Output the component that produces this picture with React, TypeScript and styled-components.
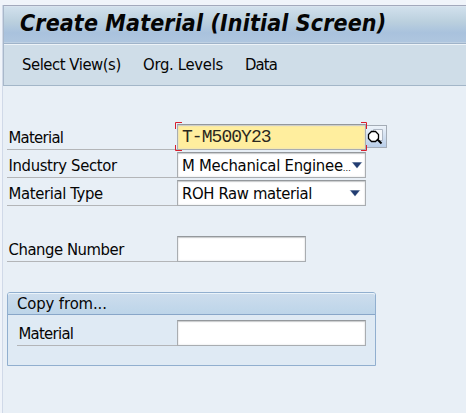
import React from "react";
import styled, { createGlobalStyle } from "styled-components";

const GlobalStyle = createGlobalStyle`
  * { box-sizing: border-box; }
  body {
    margin: 0;
    overflow: hidden;
    background: #f0f4fa;
    color: #050505;
    font-family: "DejaVu Sans Condensed", "DejaVu Sans", sans-serif;
    font-stretch: condensed;
    font-size: 16.5px;
  }
`;

const Screen = styled.div`
  height: 413px;
  padding: 5px 0 0 2px;
  overflow: hidden;
  white-space: nowrap;
`;

const Frame = styled.div`
  height: 408px;
  border-left: 1px solid #d0d9e8;
  background: #e8eff6;
`;

const TitleBar = styled.header`
  height: 39px;
  padding-left: 16px;
  border-top: 1px solid #a3a9bc;
  border-left: 1px solid #a9b8ca;
  border-bottom: 1px solid #9fb3c9;
  box-shadow: inset 0 1px #d8e3ee, inset 0 -1px #bfd1e3;
  background: linear-gradient(#d2e1ed 0%, #bbd0de 42%, #a9c2dd 72%, #afc6df 100%);
`;

const Title = styled.h1`
  margin: 0;
  font-size: 23px;
  line-height: 34px;
  font-weight: bold;
  font-style: italic;
  letter-spacing: 0.12px;
`;

const MenuBar = styled.nav`
  display: flex;
  height: 42px;
  padding-left: 18px;
  border-left: 1px solid #a9b8ca;
  border-bottom: 1px solid #a3b6c8;
  box-shadow: inset 0 1px #edf3f8;
  background: #cfdde8;
  line-height: 41px;
`;

const MenuItem = styled.span<{ $width: number; $spacing: number }>`
  width: ${(p) => p.$width}px;
  letter-spacing: ${(p) => p.$spacing}px;
`;

const Form = styled.main`
  padding: 38px 0 0 4px;
`;

const Row = styled.div<{ $gap?: number }>`
  display: flex;
  height: 26px;
  margin-bottom: ${(p) => p.$gap ?? 2}px;
`;

const Label = styled.label<{ $width: number; $spacing?: number }>`
  width: ${(p) => p.$width}px;
  padding-left: 1.5px;
  border-bottom: 1px solid #b3b5b8;
  line-height: 27px;
  letter-spacing: ${(p) => p.$spacing ?? -0.7}px;
`;

const Field = styled.div<{ $width?: number; $active?: boolean }>`
  position: relative;
  display: flex;
  align-items: center;
  justify-content: space-between;
  width: ${(p) => p.$width ?? 189}px;
  padding: 0 4px;
  border: 1px solid #a9adb1;
  border-top-color: #94989c;
  box-shadow: inset 0 1px 1px #c9cbcd, inset 0 0 2px #d9dbdd;
  background: ${(p) => (p.$active ? "#ffee9e" : "#ffffff")};
`;

const Value = styled.span<{ $spacing: number }>`
  padding-top: 1px;
  line-height: 24px;
  letter-spacing: ${(p) => p.$spacing}px;
`;

const Ellipsis = styled.span`
  font-size: 9px;
  line-height: 0;
  letter-spacing: 0;
`;

const Code = styled.span`
  color: #2b2820;
  font: 18px/22px "Liberation Mono", monospace;
  letter-spacing: -0.95px;
`;

const FocusMarks = styled.svg`
  position: absolute;
  left: -3px;
  top: -3px;
`;

const SearchButton = styled.button`
  display: flex;
  width: 21px;
  height: 23px;
  margin-top: 1px;
  padding: 3px 0 0 1px;
  border: 1px solid #a4acb6;
  border-left: 0;
  background: linear-gradient(#edf3fa, #b9cee9);
`;

const Group = styled.section`
  width: 369px;
  height: 74px;
  border: 1px solid #91afcf;
  border-radius: 3px 3px 0 0;
  background: #dfeaf4;
`;

const GroupTitle = styled.h2`
  height: 22px;
  margin: 0 0 5px;
  padding-left: 9px;
  border-bottom: 1px solid #88a6c8;
  border-radius: 2px 2px 0 0;
  box-shadow: inset 0 1px #eaf3fa;
  background: linear-gradient(#cddded, #bdd5e9);
  font-size: 16.5px;
  font-weight: normal;
  line-height: 21px;
  letter-spacing: -0.1px;
`;

const GroupBody = styled.div`
  padding-left: 9px;
`;

const ArrowIcon = styled.svg`
  flex: none;
  margin-top: -1px;
`;

const Arrow = () => (
  <ArrowIcon width="12" height="8" viewBox="0 0 12 8">
    <path d="M0.5 1H11.5L6 7.5Z" fill="#a6b4c6" />
    <path d="M1.5 1.5H10.5L6 7Z" fill="#223c71" />
  </ArrowIcon>
);

const Magnifier = () => (
  <svg width="17" height="17" viewBox="0 0 17 17">
    <path d="M6.5 0.5H15.5V11.5H6.5Z" fill="#f6f8fb" stroke="#aeb7c4" />
    <path d="M4.5 2.5H8.5L11.5 5.5V9.5L8.5 12.5H4.5L1.5 9.5V5.5Z" fill="#fff" stroke="#000" strokeWidth="1.3" />
    <path d="M10.5 10.5L14.5 14.5" stroke="#000" strokeWidth="2" />
  </svg>
);

export default function App() {
  return (
    <>
      <GlobalStyle />
      <Screen>
        <Frame>
          <TitleBar>
            <Title>Create Material (Initial Screen)</Title>
          </TitleBar>
          <MenuBar>
            <MenuItem $width={121} $spacing={-0.45}>Select View(s)</MenuItem>
            <MenuItem $width={102} $spacing={-0.3}>Org. Levels</MenuItem>
            <MenuItem $width={50} $spacing={-0.9}>Data</MenuItem>
          </MenuBar>
          <Form>
            <Row>
              <Label $width={170}>Material</Label>
              <Field $active>
                <Code>T-M500Y23</Code>
                <FocusMarks width="194" height="31" viewBox="0 0 194 31" fill="none" stroke="#d81e2c">
                  <path d="M0.5 7V0.5H7M186 0.5H191.5V7M0.5 23V28.5H7M186 28.5H191.5V23" />
                </FocusMarks>
              </Field>
              <SearchButton aria-label="Search"><Magnifier /></SearchButton>
            </Row>
            <Row>
              <Label $width={170} $spacing={-0.35}>Industry Sector</Label>
              <Field>
                <Value $spacing={-0.25}>M Mechanical Enginee<Ellipsis>…</Ellipsis></Value>
                <Arrow />
              </Field>
            </Row>
            <Row $gap={30}>
              <Label $width={170} $spacing={-0.35}>Material Type</Label>
              <Field>
                <Value $spacing={-0.35}>ROH Raw material</Value>
                <Arrow />
              </Field>
            </Row>
            <Row $gap={30}>
              <Label $width={170} $spacing={-0.45}>Change Number</Label>
              <Field $width={129} />
            </Row>
            <Group>
              <GroupTitle>Copy from...</GroupTitle>
              <GroupBody>
                <Row>
                  <Label $width={160}>Material</Label>
                  <Field />
                </Row>
              </GroupBody>
            </Group>
          </Form>
        </Frame>
      </Screen>
    </>
  );
}
